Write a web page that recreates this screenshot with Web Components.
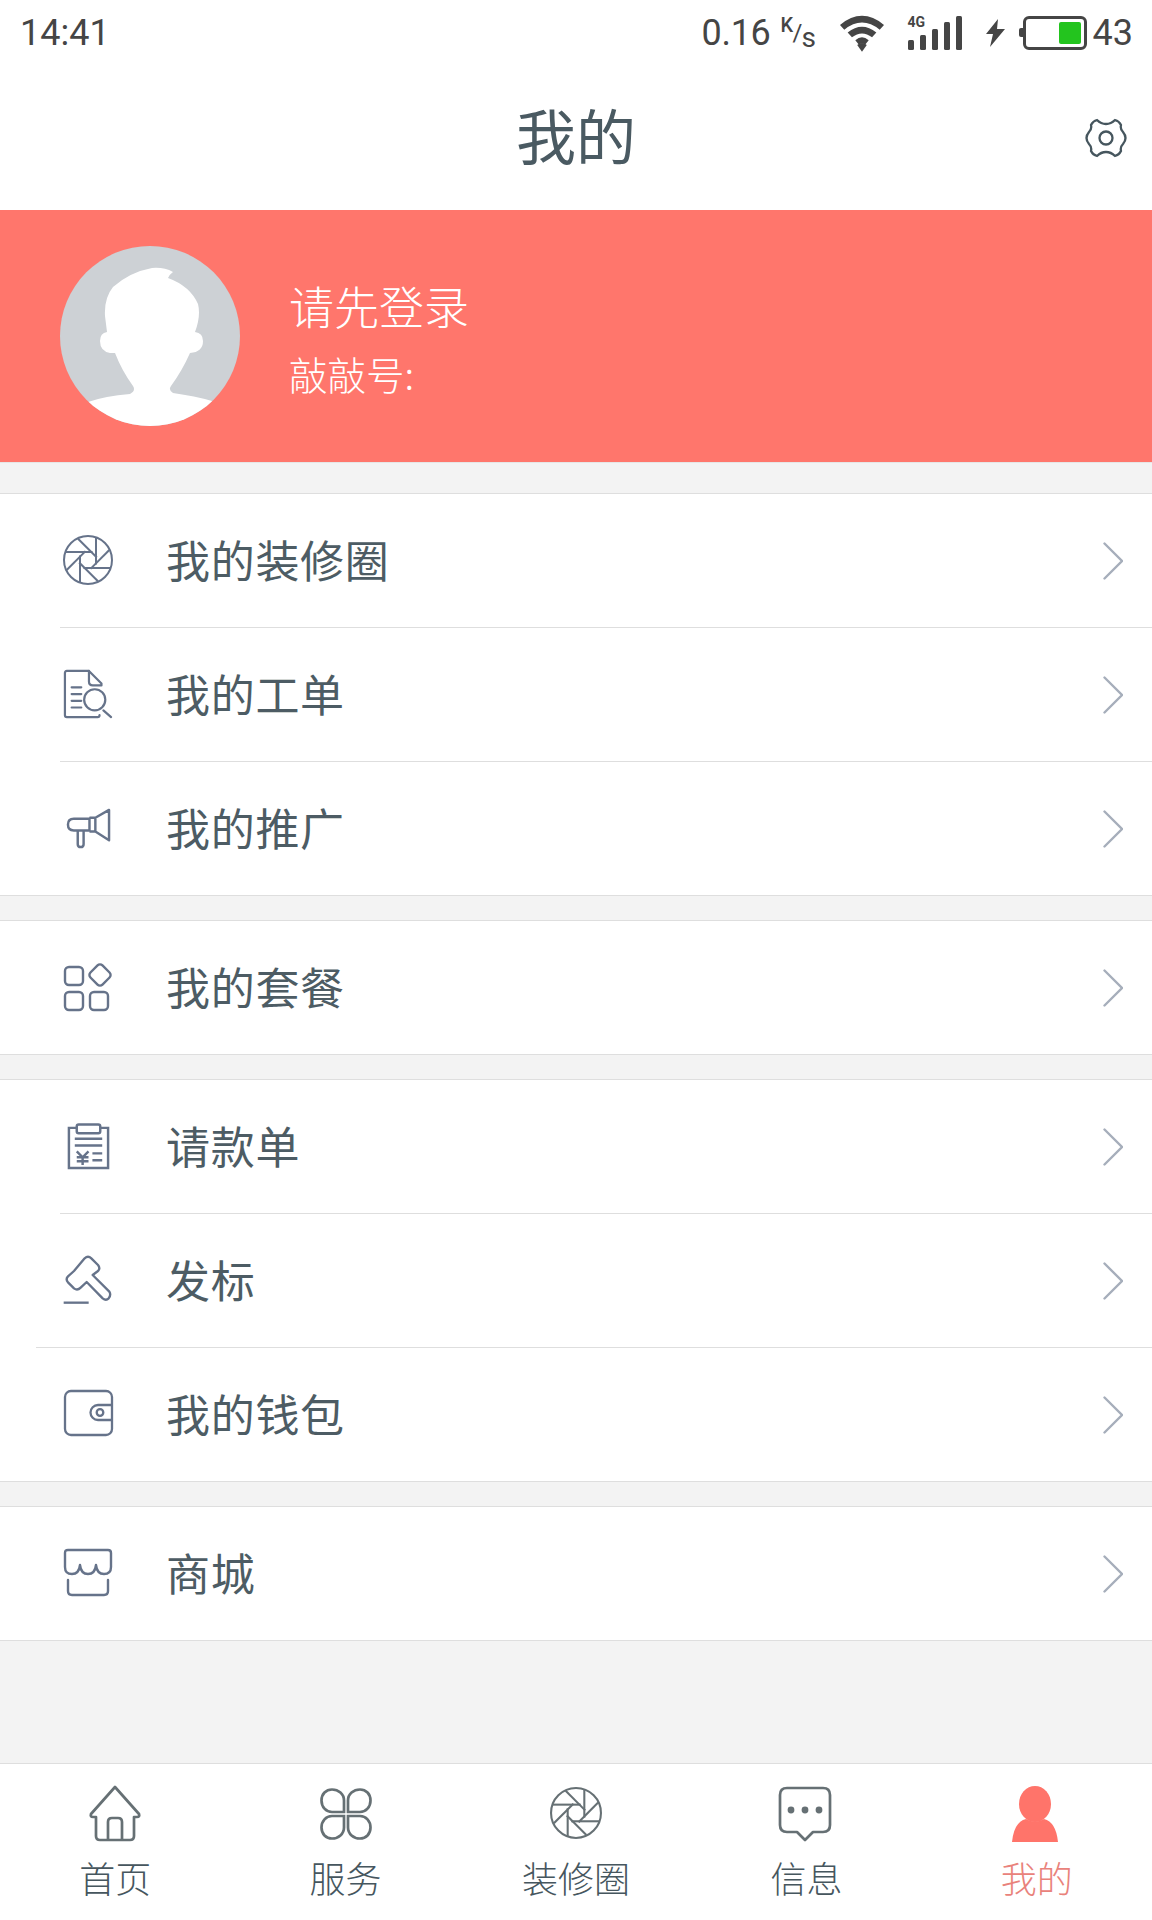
<!DOCTYPE html>
<html lang="zh"><head><meta charset="utf-8"><style>
html,body{margin:0;padding:0;background:#f3f3f3}
body{width:1152px;height:1920px;font-family:"Noto Sans CJK SC","Noto Sans",sans-serif}
app-page{display:flex}
</style></head><body>
<app-page></app-page>
<script>
const blades=[0,45,90,135,180,225,270,315].map(a=>`<path transform="rotate(${a} 25 25)" d="M2.900 17H29.500"/>`).join("");
const petal=`<path d="M24 24H12C6 24 1.500 19 1.500 12.500C1.500 6 6 1.500 12 1.500C18.500 1.500 24 6 24 12.500Z"/>`;
const ICONS={
aperture:`<svg viewBox="0 1 50 50" fill="none" stroke="currentColor" stroke-width="2"><circle cx="25" cy="25" r="24"/>${blades}</svg>`,
doc:`<svg viewBox="0 1 52 52" fill="none" stroke="currentColor" stroke-width="2.300" stroke-linecap="round" stroke-linejoin="round"><path d="M27 2H4Q2 2 2 4V48Q2 50 4 50H36Q38 50 38 48"/><path d="M27 2V13Q27 17 31 17H40V15L27 2Z"/><path d="M9 19H19M9 26H19M9 33H19M9 40H19"/><circle cx="33" cy="32" r="11"/><path d="M42 43L50 50"/></svg>`,
horn:`<svg viewBox="0 0 46 42" fill="none" stroke="currentColor" stroke-width="2.500" stroke-linejoin="round"><path d="M24 11H8Q2 11 2 17Q2 23 8 23H24ZM24 11V23M30 10V24L44 33V2ZM24 10H30V24H24M12 23V37Q12 40 15 40Q18 40 18 37V23"/></svg>`,
apps:`<svg viewBox="0 0 50 50" fill="none" stroke="currentColor" stroke-width="2.400" stroke-linejoin="round"><rect x="2" y="4" width="18" height="18" rx="4"/><rect x="2" y="29" width="18" height="18" rx="4"/><rect x="27" y="29" width="18" height="18" rx="4"/><rect x="28.500" y="3.500" width="17" height="17" rx="3.500" transform="rotate(45 37 12)"/></svg>`,
bill:`<svg viewBox="0 0 44 48" fill="none" stroke="currentColor" stroke-width="2.500"><path d="M10 5H2V46H42V5H34"/><rect x="10" y="1.500" width="24" height="9" rx="2"/><path d="M8 16H36M8 23H36M26 31H36M26 38H36"/><path d="M10 29L16 35L22 29M16 35V43M10 35H22M10 39H22"/></svg>`,
hammer:`<svg viewBox="133 165 150 150" fill="none" stroke="currentColor" stroke-width="7" stroke-linejoin="round" stroke-linecap="round"><path d="M198 172Q208 163 218 172L238 192Q246 202 238 210L222 222L272 272Q278 282 270 292Q262 300 252 292L204 243L186 260Q176 270 166 262L148 244Q140 234 148 226L166 210Z"/><path d="M135 305H210" stroke-linecap="butt"/></svg>`,
wallet:`<svg viewBox="0 2 50 48" fill="none" stroke="currentColor" stroke-width="2.300"><rect x="2" y="2" width="47" height="44" rx="6"/><path d="M49 16H35A7.500 7.500 0 0 0 35 31H49"/><circle cx="37" cy="23.500" r="3.300"/></svg>`,
store:`<svg viewBox="0 2 50 48" fill="none" stroke="currentColor" stroke-width="2.400" stroke-linecap="round" stroke-linejoin="round"><path d="M5 2H45Q48 2 48 5V19Q48 26 41 26Q34 26 33 17Q32 26 25 26Q18 26 17 17Q16 26 9 26Q2 26 2 19V5Q2 2 5 2Z"/><path d="M5 32V43Q5 47 9 47H41Q45 47 45 43V32"/></svg>`,
home:`<svg viewBox="0 1 54 56" fill="none" stroke="currentColor" stroke-width="2.700" stroke-linejoin="round"><path d="M27 2L51 29Q52 32 49 32H46V51Q46 55 42 55H12Q8 55 8 51V32H5Q2 32 3 29Z"/><path d="M20 55V37Q20 33 24 33H30Q34 33 34 37V55"/></svg>`,
clover:`<svg viewBox="0 0 54 54" fill="none" stroke="currentColor" stroke-width="2.700"><g transform="translate(1 1)">${petal}</g><g transform="translate(53 1) scale(-1 1)">${petal}</g><g transform="translate(1 53) scale(1 -1)">${petal}</g><g transform="translate(53 53) scale(-1 -1)">${petal}</g></svg>`,
chat:`<svg viewBox="1 0 54 56" fill="none" stroke="currentColor" stroke-width="2.700" stroke-linejoin="round"><path d="M9 2H45Q52 2 52 9V39Q52 46 45 46H35L27 54L19 46H9Q2 46 2 39V9Q2 2 9 2Z"/><g fill="currentColor" stroke="none"><circle cx="13" cy="24" r="3.400"/><circle cx="27" cy="24" r="3.400"/><circle cx="41" cy="24" r="3.400"/></g></svg>`,
person:`<svg viewBox="2 0 46 56" fill="currentColor"><ellipse cx="23" cy="18" rx="16" ry="18"/><path d="M0 56Q2 36 14 33Q23 38 32 33Q44 36 46 56Z"/></svg>`
};
function def(name,html,init){customElements.define(name,class extends HTMLElement{constructor(){super();const s=this.attachShadow({mode:"open"});s.innerHTML=html;}connectedCallback(){init&&init.call(this,this.shadowRoot);}});}

def("status-bar",`<style>:host{display:flex;align-items:center;height:66px;padding:0 19px 0 20px;box-sizing:border-box;background:#fff;color:#454545;font:36px/1 Roboto,sans-serif}
.sp{flex:1}svg{display:block}
.ks{margin-left:10px;display:block;position:relative;width:35px;height:34px}.ks span{position:absolute}</style>
<span>14:41</span><span class="sp"></span>
<span style="letter-spacing:-.3px">0.16</span><span class="ks"><span style="left:0;top:-1px;font:500 20px/1 Roboto,sans-serif">K</span><span style="left:12px;top:5px;font:400 24px/1 Roboto,sans-serif">/</span><span style="left:21px;top:8px;font:400 28px/1 Roboto,sans-serif">s</span></span>
<svg style="margin-left:24px" width="44" height="37" viewBox="0 0 46 38" fill="#454545"><path d="M0 10Q23 -9 46 10L41.500 15Q23 0 4.500 15Z"/><path d="M8 18Q23 6 38 18L33.500 23Q23 15 12.500 23Z"/><path d="M16 26Q23 20 30 26L26 31Q23 28 20 31Z"/><path d="M18 31Q23 27 28 31L23 38Z"/></svg>
<span style="margin-left:24px;position:relative;display:block;width:54px;height:34px"><span style="position:absolute;left:0;top:-1px;font:700 14px/1 Roboto,sans-serif">4G</span>
<svg style="position:absolute;left:0;top:0" width="54" height="34" viewBox="0 0 54 34" fill="#454545"><rect x="0" y="24" width="6" height="10" rx="1.500"/><rect x="12" y="19" width="6" height="15" rx="1.500"/><rect x="24" y="13" width="6" height="21" rx="1.500"/><rect x="36" y="6" width="6" height="28" rx="1.500"/><rect x="48" y="0" width="6" height="34" rx="1.500"/></svg></span>
<svg style="margin-left:24px" width="19" height="28" viewBox="0 0 19 28" fill="#454545"><path d="M12 0L0 15H7L4 28L19 10H11Z"/></svg>
<span style="margin-left:14px;position:relative;display:block;width:68px;height:34px"><span style="position:absolute;left:0;top:12px;width:6px;height:9px;background:#454545;border-radius:2px"></span><span style="position:absolute;left:4px;top:0;box-sizing:border-box;display:flex;justify-content:flex-end;width:64px;height:34px;border:3.500px solid #454545;border-radius:6px;padding:3px 3px"><span style="width:22px;background:#23c41e;border-radius:2px"></span></span></span>
<span style="margin-left:6px">43</span>`);

def("title-bar",`<style>:host{display:flex;align-items:center;justify-content:center;height:144px;background:#fff;position:relative;color:#4a5a62;font:400 60px/1 "Noto Sans CJK SC",sans-serif}
svg{position:absolute;right:24px;top:52px}</style><span style="margin-top:-8px"><slot></slot></span>
<svg width="44" height="40" viewBox="0 0 44 40" fill="none" stroke="#46565e" stroke-width="2.300" stroke-linejoin="round"><path d="M13 2Q17 6 22 6Q27 6 31 2Q35 3 37 7Q36 11 39 14Q44 20 39 26Q36 29 37 33Q35 37 31 38Q27 34 22 34Q17 34 13 38Q9 37 7 33Q8 29 5 26Q0 20 5 14Q8 11 7 7Q9 3 13 2Z"/><circle cx="22" cy="20" r="6.500"/></svg>`);

def("user-banner",`<style>:host{display:flex;align-items:center;height:253px;background:#ff766c;color:#fff;padding-left:60px;box-sizing:border-box;border-bottom:1px solid #e6e6e6}
.av{width:180px;height:180px;flex:none}.t{margin-left:49px;display:flex;flex-direction:column}
.a{font-size:45px;line-height:56px;font-weight:300;margin-top:3px}.b{font-size:38.500px;line-height:48px;margin-top:15px;font-weight:300}</style>
<svg class="av" viewBox="0 0 180 180"><defs><clipPath id="c"><circle cx="90" cy="90" r="90"/></clipPath></defs><g clip-path="url(#c)"><rect width="180" height="180" fill="#cdd1d5"/>
<path fill="#fff" d="M113 26Q104 21 92 22Q70 26 53 41Q44 52 45 70L47 86Q40 87 40 95Q40 105 50 107L55 107Q62 125 73 140Q76 145 70 148Q45 150 28 156L30 182H152V155Q135 150 113 147Q108 144 111 140Q122 125 130 107Q143 106 143 95Q143 87 135 86Q141 70 138 58Q130 40 108 32Q110 28 113 26Z"/></g></svg>
<div class="t"><div class="a"><slot name="a"></slot></div><div class="b"><slot name="b"></slot></div></div>`);

def("menu-group",`<style>:host{display:block;background:#fff;border-top:1px solid #dedede;border-bottom:1px solid #dedede}</style><slot></slot>`);

def("menu-row",`<style>:host{display:block;height:134px;box-sizing:border-box;color:#4d5c64;font-size:44px}
:host(:last-child){height:133px}
.r{height:100%;box-sizing:border-box;margin-left:var(--inset,60px);border-bottom:1px solid #dedede;display:flex;align-items:center}
:host(:last-child) .r{border-bottom:0}
.i{width:52px;height:52px;margin-left:calc(2px + var(--inset-d,0px));color:#66738a;display:flex;align-items:center;justify-content:center;flex:none}
.i svg{display:block;width:var(--w,50px);height:var(--w,50px);overflow:visible}
.l{margin-left:52px;flex:1;line-height:1;font-weight:400;letter-spacing:.7px;margin-top:-4px}
.c{margin-right:29px;width:20px;height:38px;flex:none}</style>
<div class="r"><span class="i"></span><span class="l"><slot></slot></span>
<svg class="c" viewBox="0 0 20 38" fill="none" stroke="#a6aebb" stroke-width="2.400" stroke-linecap="round"><path d="M1.500 1.500L19 19L1.500 36.500"/></svg></div>`,function(s){s.querySelector(".i").innerHTML=ICONS[this.getAttribute("icon")];});

def("tab-bar",`<style>:host{display:grid;grid-template-columns:repeat(5,1fr);height:157px;box-sizing:border-box;background:#fff;border-top:1px solid #dedede}</style><slot></slot>`);

def("tab-item",`<style>:host{display:flex;flex-direction:column;align-items:center;color:#46565e;font-size:36px;line-height:1;font-weight:300}
:host([active]){color:#e9827b}:host([active]) .i{color:#ff746a}
.i{height:56px;width:56px;margin-top:22px;color:#667074;display:flex;align-items:center;justify-content:center}.i svg{height:var(--s,56px);width:var(--s,56px);display:block;overflow:visible}
.t{margin-top:17px}</style><span class="i"></span><span class="t"><slot></slot></span>`,function(s){s.querySelector(".i").innerHTML=ICONS[this.getAttribute("icon")];});

def("app-page",`<style>:host{display:flex;flex-direction:column;width:1152px;height:1920px;background:#f3f3f3}
.g1{margin-top:30px}.g2{margin-top:24px}.sp{flex:1}</style>
<status-bar></status-bar>
<title-bar>我的</title-bar>
<user-banner><span slot="a">请先登录</span><span slot="b">敲敲号:</span></user-banner>
<menu-group class="g1"><menu-row icon="aperture">我的装修圈</menu-row><menu-row icon="doc">我的工单</menu-row><menu-row icon="horn" style="--w:45px">我的推广</menu-row></menu-group>
<menu-group class="g2"><menu-row icon="apps">我的套餐</menu-row></menu-group>
<menu-group class="g2"><menu-row icon="bill" style="--w:47px">请款单</menu-row><menu-row icon="hammer" style="--inset:36px;--inset-d:24px">发标</menu-row><menu-row icon="wallet">我的钱包</menu-row></menu-group>
<menu-group class="g2"><menu-row icon="store">商城</menu-row></menu-group>
<span class="sp"></span>
<tab-bar><tab-item icon="home">首页</tab-item><tab-item icon="clover" style="--s:54px">服务</tab-item><tab-item icon="aperture" style="--s:52px">装修圈</tab-item><tab-item icon="chat">信息</tab-item><tab-item icon="person" active>我的</tab-item></tab-bar>`);
</script></body></html>
